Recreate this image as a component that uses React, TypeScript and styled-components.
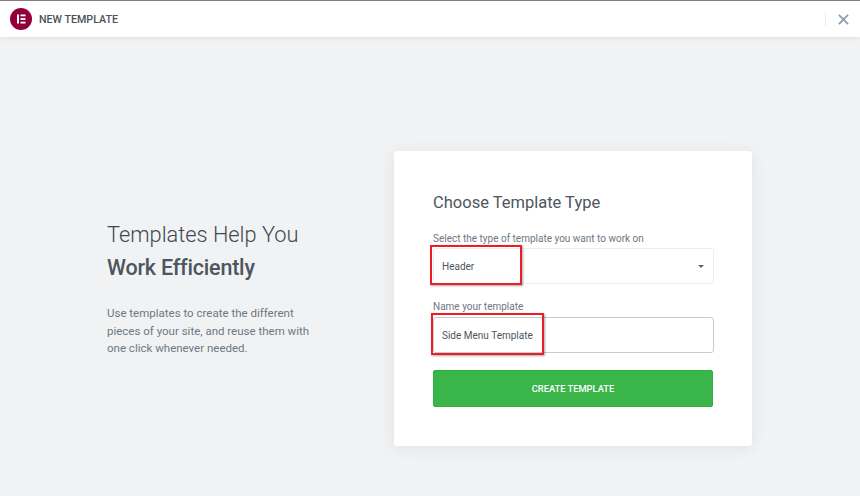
import React from 'react';
import styled, { createGlobalStyle } from 'styled-components';

const Global = createGlobalStyle`
  html, body { margin: 0; padding: 0; height: 100%; overflow: hidden; }
  body { font-family: Roboto, "Liberation Sans", sans-serif; background: #f1f2f4; }
  * { box-sizing: border-box; }
`;

const Page = styled.div`
  width: 860px;
  height: 496px;
  display: flex;
  flex-direction: column;
  background: #f1f2f4;
`;

const TopBar = styled.header`
  height: 37px;
  flex: none;
  display: flex;
  align-items: center;
  background: #fff;
  border-top: 1px solid #7d7d7d;
  box-shadow: 0 1px 5px rgba(0, 0, 0, 0.08);
  padding: 0 10px;
`;

const Logo = styled.svg`
  width: 22px;
  height: 22px;
  flex: none;
`;

const BarTitle = styled.span`
  margin-left: 7px;
  font-size: 10.7px;
  font-weight: 500;
  color: #4b5259;
`;

const CloseWrap = styled.div`
  margin-left: auto;
  width: 31px;
  height: 13px;
  display: flex;
  align-items: center;
  justify-content: center;
  border-left: 1px solid #e8eaec;
  margin-right: -6px;
  padding-left: 4px;
`;

const Body = styled.main`
  flex: 1;
  display: flex;
  padding: 114px 0 0 107px;
`;

const Intro = styled.section`
  width: 287px;
  padding-top: 67px;
  flex: none;
`;

const IntroTitle = styled.h1`
  margin: 0;
  font-size: 21.8px;
  font-weight: 300;
  line-height: 34px;
  color: #3f4850;
`;

const IntroStrong = styled.strong`
  display: block;
  margin-top: -1px;
  font-size: 21.5px;
  font-weight: 500;
  letter-spacing: -0.2px;
  color: #4d565e;
`;

const IntroText = styled.p`
  margin: 20px 0 0;
  font-size: 11.5px;
  line-height: 17.5px;
  color: #6d7882;
`;

const Card = styled.section`
  width: 358px;
  height: 295px;
  background: #fff;
  border-radius: 3px;
  box-shadow: 0 2px 16px rgba(0, 0, 0, 0.07);
  padding: 42px 38px 0 39px;
  display: flex;
  flex-direction: column;
`;

const CardTitle = styled.h2`
  margin: 0;
  font-size: 16.5px;
  font-weight: 400;
  line-height: 20px;
  color: #4d565e;
`;

const Label = styled.label`
  display: block;
  font-size: 10px;
  line-height: 13px;
  color: #6d7882;
  height: 13px;
`;

const Field = styled.div<{ $top: number }>`
  margin-top: ${(p) => p.$top}px;
`;

const Box = styled.div<{ $border: string; $gap: number }>`
  position: relative;
  height: 36px;
  margin-top: ${(p) => p.$gap}px;
  width: 281px;
  border: 1px solid ${(p) => p.$border};
  border-radius: 3px;
  padding: 0 8px;
  display: flex;
  align-items: center;
  justify-content: space-between;
  font-size: 10px;
  color: #4d565e;
`;

const Caret = styled.span`
  width: 0;
  height: 0;
  border-left: 3px solid transparent;
  border-right: 3px solid transparent;
  border-top: 3px solid #5b636b;
  margin-right: 1px;
`;

const Highlight = styled.span<{ $w: number; $h: number; $left: number; $top: number }>`
  position: absolute;
  left: ${(p) => p.$left}px;
  top: ${(p) => p.$top}px;
  width: ${(p) => p.$w}px;
  height: ${(p) => p.$h}px;
  border: 2px solid #ee1c25;
  box-shadow: 1px 1px 2px rgba(0, 0, 0, 0.35);
`;

const CreateButton = styled.button`
  margin-top: 17px;
  width: 280px;
  height: 37px;
  background: #39b54a;
  border: 1px solid #2fae41;
  border-radius: 2px;
  color: #fff;
  font-family: inherit;
  font-size: 9.3px;
  font-weight: 500;
  padding: 0;
`;

export default function App() {
  return (
    <Page>
      <Global />
      <TopBar>
        <Logo viewBox="0 0 22 22">
          <circle cx="11" cy="11" r="11" fill="#92003b" />
          <rect x="7" y="6.5" width="2" height="9" fill="#fff" />
          <rect x="10.5" y="6.5" width="5" height="1.8" fill="#fff" />
          <rect x="10.5" y="10.1" width="5" height="1.8" fill="#fff" />
          <rect x="10.5" y="13.7" width="5" height="1.8" fill="#fff" />
        </Logo>
        <BarTitle>NEW TEMPLATE</BarTitle>
        <CloseWrap>
          <svg width="11" height="11" viewBox="0 0 12 12">
            <path d="M1 1 L11 11 M11 1 L1 11" stroke="#8f9ba6" strokeWidth="1.9" />
          </svg>
        </CloseWrap>
      </TopBar>
      <Body>
        <Intro>
          <IntroTitle>
            Templates Help You
            <IntroStrong>Work Efficiently</IntroStrong>
          </IntroTitle>
          <IntroText>
            Use templates to create the different
            <br />
            pieces of your site, and reuse them with
            <br />
            one click whenever needed.
          </IntroText>
        </Intro>
        <Card>
          <CardTitle>Choose Template Type</CardTitle>
          <Field $top={19}>
            <Label>Select the type of template you want to work on</Label>
            <Box $border="#eceef0" $gap={3}>
              Header
              <Caret />
              <Highlight $left={-4} $top={-4} $w={92} $h={40} />
            </Box>
          </Field>
          <Field $top={16}>
            <Label>Name your template</Label>
            <Box $border="#c6ccd2" $gap={4}>
              Side Menu Template
              <Highlight $left={-3} $top={-5} $w={113} $h={42} />
            </Box>
          </Field>
          <CreateButton>CREATE TEMPLATE</CreateButton>
        </Card>
      </Body>
    </Page>
  );
}
